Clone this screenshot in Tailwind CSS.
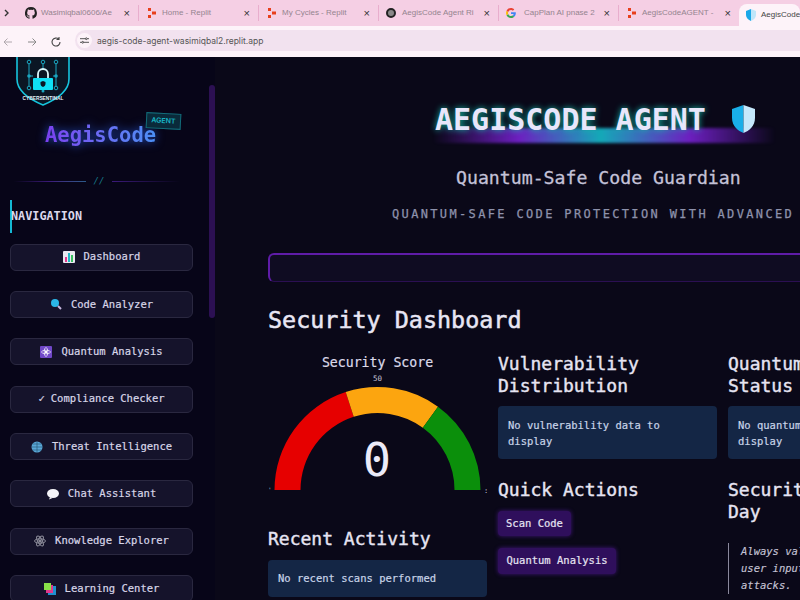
<!DOCTYPE html>
<html lang="en">
<head>
    <meta charset="UTF-8">
    <meta name="viewport" content="width=device-width, initial-scale=1.0">
    <title>AegisCode Agent</title>
    <script src="https://cdn.jsdelivr.net/npm/@tailwindcss/browser@4"></script>
</head>
<body class="w-[800px] h-[600px] overflow-hidden bg-[#0a0818] font-['DejaVu_Sans_Mono',monospace]">

    <!-- Browser tabs -->
    <div class="h-[26px] bg-[#f5cfe4] flex items-center text-[8px] text-[#94848f] font-['Liberation_Sans',sans-serif] overflow-hidden">
        <svg class="w-[18px] h-[26px] shrink-0" viewBox="0 0 18 26"><path d="M5 11l3 3-3 3" transform="translate(0 -1)" fill="none" stroke="#333" stroke-width="1.4"/></svg>
        <div class="w-[121px] shrink-0 h-4 flex items-center border-r border-[#e8aecd] pl-[7px] pr-[8px]">
            <svg class="w-3 h-3 shrink-0" viewBox="0 0 16 16"><path fill="#222" d="M8 0a8 8 0 0 0-2.5 15.6c.4.1.5-.2.5-.4v-1.4c-2.2.5-2.7-1-2.7-1-.4-.9-.9-1.200-.9-1.200-.7-.5.1-.5.1-.5.8.1 1.200.8 1.200.8.7 1.200 1.900.9 2.300.7.1-.5.3-.9.5-1.100-1.800-.2-3.600-.9-3.600-4 0-.9.3-1.600.8-2.100-.1-.2-.4-1 .1-2.100 0 0 .7-.2 2.200.8a7.600 7.600 0 0 1 4 0c1.500-1 2.200-.8 2.200-.8.4 1.100.2 1.900.1 2.100.5.6.8 1.300.8 2.100 0 3.100-1.900 3.700-3.700 3.900.3.3.6.800.6 1.500v2.200c0 .2.1.5.6.4A8 8 0 0 0 8 0z"/></svg>
            <span class="ml-[4px] whitespace-nowrap">Wasimiqbal0606/Ae</span>
            <span class="ml-auto text-[#333] text-[11px] leading-none">×</span>
        </div>
        <div class="w-[120px] shrink-0 h-4 flex items-center border-r border-[#e8aecd] pl-[7px] pr-[8px]">
            <svg class="w-[10px] h-[10px] shrink-0 ml-[1px]" viewBox="0 0 10 10"><path fill="#e8401c" d="M1 0h3v3H1zM5 3.500h4v3H5zM1 7h3v3H1z"/></svg>
            <span class="ml-[5px] whitespace-nowrap">Home - Replit</span>
            <span class="ml-auto text-[#333] text-[11px] leading-none">×</span>
        </div>
        <div class="w-[120px] shrink-0 h-4 flex items-center border-r border-[#e8aecd] pl-[7px] pr-[8px]">
            <svg class="w-[10px] h-[10px] shrink-0 ml-[1px]" viewBox="0 0 10 10"><path fill="#e8401c" d="M1 0h3v3H1zM5 3.500h4v3H5zM1 7h3v3H1z"/></svg>
            <span class="ml-[5px] whitespace-nowrap">My Cycles - Replit</span>
            <span class="ml-auto text-[#333] text-[11px] leading-none">×</span>
        </div>
        <div class="w-[120px] shrink-0 h-4 flex items-center border-r border-[#e8aecd] pl-[7px] pr-[8px]">
            <div class="w-[10px] h-[10px] rounded-full bg-[#888] border-2 border-[#222] shrink-0"></div>
            <span class="ml-[6px] whitespace-nowrap">AegisCode Agent Ri</span>
            <span class="ml-auto text-[#333] text-[11px] leading-none">×</span>
        </div>
        <div class="w-[120px] shrink-0 h-4 flex items-center border-r border-[#e8aecd] pl-[7px] pr-[8px]">
            <svg class="w-[10px] h-[10px] shrink-0" viewBox="0 0 16 16"><path fill="#4285f4" d="M15.700 8.200c0-.6-.1-1.100-.1-1.600H8v3h4.300c-.2 1-.8 1.800-1.600 2.400l2.500 1.900c1.500-1.300 2.500-3.300 2.500-5.700z"/><path fill="#34a853" d="M8 16c2.200 0 4-.7 5.200-2l-2.500-1.900c-.7.5-1.600.8-2.700.8-2.100 0-3.900-1.400-4.500-3.300L.9 11.500C2.200 14.200 4.900 16 8 16z"/><path fill="#fbbc05" d="M3.500 9.600c-.3-1-.3-2.100 0-3.200L.9 4.500c-1.100 2.200-1.100 4.800 0 7z"/><path fill="#ea4335" d="M8 3.200c1.200 0 2.200.4 3 1.200l2.200-2.200C11.900.9 10.100 0 8 0 4.900 0 2.200 1.800.9 4.500l2.600 1.900C4.100 4.500 5.900 3.200 8 3.200z"/></svg>
            <span class="ml-[8px] whitespace-nowrap">CapPlan AI pnase 2</span>
            <span class="ml-auto text-[#333] text-[11px] leading-none">×</span>
        </div>
        <div class="w-[120px] shrink-0 h-4 flex items-center pl-[7px] pr-[8px]">
            <svg class="w-[10px] h-[10px] shrink-0 ml-[1px]" viewBox="0 0 10 10"><path fill="#e8401c" d="M1 0h3v3H1zM5 3.500h4v3H5zM1 7h3v3H1z"/></svg>
            <span class="ml-[5px] whitespace-nowrap">AegisCodeAGENT -</span>
            <span class="ml-auto text-[#333] text-[11px] leading-none">×</span>
        </div>
        <div class="flex-1 self-end h-[22px] bg-[#fdf3f9] rounded-t-lg flex items-center pl-[7px] text-[#444] overflow-hidden">
            <svg class="w-[10px] h-3 shrink-0" viewBox="0 0 10 12"><path d="M5 0L0 2v4c0 3 2.500 5 5 6z" fill="#1ba8e8"/><path d="M5 0l5 2v4c0 3-2.500 5-5 6z" fill="#bfe6fa"/></svg>
            <span class="ml-[5px] whitespace-nowrap">AegisCode</span>
        </div>
    </div>

    <!-- Address bar -->
    <div class="h-[31px] bg-[#fdf3f9] flex items-center pl-[2px]">
        <svg class="w-3 h-3" viewBox="0 0 12 12"><path d="M10 6H2M5.500 2.500L2 6l3.500 3.500" fill="none" stroke="#b0a8ae" stroke-width="1"/></svg>
        <svg class="w-3 h-3 ml-[12px]" viewBox="0 0 12 12"><path d="M2 6h8M6.500 2.500L10 6 6.500 9.500" fill="none" stroke="#888" stroke-width="1"/></svg>
        <svg class="w-3 h-3 ml-[12px]" viewBox="0 0 12 12"><path d="M10 6a4 4 0 1 1-1.200-2.800M9 1v2.500H6.500" fill="none" stroke="#444" stroke-width="1.100"/></svg>
        <div class="ml-[13px] mb-[3px] flex-1 h-[21px] bg-[#f2e2ef] rounded-l-full flex items-center pl-[2px] text-[8.500px] text-[#555] font-['Inter',sans-serif]">
            <span class="w-[15px] h-[15px] bg-[#fdf3f9] rounded-full flex items-center justify-center">
                <svg class="w-[9px] h-[9px]" viewBox="0 0 10 10"><path d="M0 3h6M8 3h2M0 7h2M4 7h6" stroke="#444" fill="none"/><circle cx="7" cy="3" r="1" fill="none" stroke="#444"/><circle cx="3" cy="7" r="1" fill="none" stroke="#444"/></svg>
            </span>
            <span class="ml-[5px] mt-[2px]">aegis-code-agent-wasimiqbal2.replit.app</span>
        </div>
    </div>

    <div class="flex h-[543px] overflow-hidden">

        <!-- Sidebar -->
        <aside class="w-[215px] shrink-0 bg-[#070518] relative overflow-hidden">
            <!-- scrollbar -->
            <div class="absolute right-0 top-[28px] w-[6px] h-[233px] bg-[#2c1053] rounded-sm"></div>

            <div class="ml-[16px] w-[54px] h-[49px] overflow-hidden">
                <svg class="w-[54px] h-[49px]" viewBox="0 0 54 49">
                    <path d="M1 -2v24c0 13 14 21 26 26 12-5 26-13 26-26V-2" fill="#0b1624" stroke="#16c4dc" stroke-width="1.600"/>
                    <path d="M13 5v26M27 5v7M40 5v26M13 19h4M40 19h-3" fill="none" stroke="#1aa6c0" stroke-width="1"/>
                    <circle cx="13" cy="5" r="1.800" fill="#0b1624" stroke="#1aa6c0"/><circle cx="27" cy="5" r="1.800" fill="#0b1624" stroke="#1aa6c0"/><circle cx="40" cy="5" r="1.800" fill="#0b1624" stroke="#1aa6c0"/>
                    <circle cx="13" cy="19" r="1.800" fill="#1aa6c0"/><circle cx="40" cy="19" r="1.800" fill="#1aa6c0"/>
                    <circle cx="13" cy="31" r="1.800" fill="#0b1624" stroke="#1aa6c0"/><circle cx="27" cy="34" r="1.500" fill="#1aa6c0"/><circle cx="40" cy="31" r="1.800" fill="#0b1624" stroke="#1aa6c0"/>
                    <path d="M22 21v-4a5 5 0 0 1 10 0v4" fill="none" stroke="#d9f7fb" stroke-width="1.800"/>
                    <rect x="17" y="21" width="20" height="12" rx="1" fill="#0fe0f5"/>
                    <path d="M27 24l2.500 1v2c0 1.500-1.300 2.500-2.500 3-1.200-.5-2.500-1.500-2.500-3v-2z" fill="#0b1624"/>
                    <text x="27" y="43" text-anchor="middle" font-size="4.800" font-weight="700" fill="#e6f4f7" font-family="Liberation Sans">CYBERSENTINAL</text>
                </svg>
            </div>

            <div class="relative h-[62px]">
                <div class="absolute left-[45px] top-[16px] text-[20.500px] leading-[26px] font-bold text-transparent bg-clip-text bg-linear-to-r from-[#7a3ff0] to-[#4a8ff5] drop-shadow-[0_0_5px_#2450c8]">AegisCode</div>
                <div class="absolute left-[146px] top-[7px] w-[35px] h-[16px] rotate-[3deg] border border-[#126a78] bg-[#0a2a3a] text-[#19b8c8] text-[7px] font-['Inter',sans-serif] font-semibold flex items-center justify-center">AGENT</div>
            </div>

            <div class="flex items-center mt-[11px] ml-[14px] w-[170px] h-[4px]">
                <div class="h-px w-[72px] bg-linear-to-r from-transparent via-[#3b1a7a] to-[#2a5a8a]"></div>
                <span class="w-[26px] text-center text-[9px] leading-none italic text-[#167a8a]">//</span>
                <div class="h-px w-[68px] bg-linear-to-r from-[#3b1a7a] to-transparent"></div>
            </div>

            <div class="mt-[17px] ml-[10px] h-[33px] border-l-2 border-[#14b8d4] flex items-center text-[11.800px] font-bold text-[#dcd8ec]"><span class="-ml-[1px]">NAVIGATION</span></div>

            <nav class="mt-[10.500px] ml-[10px] w-[183px] flex flex-col gap-[20.400px] text-[10.500px] text-[#d8d6e8] [-webkit-text-stroke:0.2px_#d8d6e8]">
                <div class="h-[27px] shrink-0 bg-[#15132b] border border-[#2a2840] rounded-md flex items-center justify-center gap-[9px]">
                    <svg class="w-3 h-3" viewBox="0 0 12 12"><rect width="12" height="12" rx="1" fill="#e8e8f0"/><rect x="2" y="6" width="2" height="5" fill="#e0388c"/><rect x="5" y="2" width="2" height="9" fill="#22b8c8"/><rect x="8" y="4" width="2" height="7" fill="#38c060"/></svg>
                    <span>Dashboard</span>
                </div>
                <div class="h-[27px] shrink-0 bg-[#15132b] border border-[#2a2840] rounded-md flex items-center justify-center gap-[9px]">
                    <svg class="w-3 h-3" viewBox="0 0 12 12"><circle cx="5" cy="5" r="4" fill="#2bb6e8"/><path d="M8 8l3 3" stroke="#c8b8e0" stroke-width="2"/></svg>
                    <span>Code Analyzer</span>
                </div>
                <div class="h-[27px] shrink-0 bg-[#15132b] border border-[#2a2840] rounded-md flex items-center justify-center gap-[9px]">
                    <svg class="w-3 h-3" viewBox="0 0 12 12"><rect width="12" height="12" rx="1" fill="#7048c8"/><circle cx="6" cy="6" r="1.200" fill="#fff"/><ellipse cx="6" cy="6" rx="4.500" ry="1.800" fill="none" stroke="#fff" stroke-width=".7"/><ellipse cx="6" cy="6" rx="1.800" ry="4.500" fill="none" stroke="#fff" stroke-width=".7"/></svg>
                    <span>Quantum Analysis</span>
                </div>
                <div class="h-[27px] shrink-0 bg-[#15132b] border border-[#2a2840] rounded-md flex items-center justify-center gap-[6px]">
                    <span>✓</span>
                    <span>Compliance Checker</span>
                </div>
                <div class="h-[27px] shrink-0 bg-[#15132b] border border-[#2a2840] rounded-md flex items-center justify-center gap-[9px]">
                    <svg class="w-3 h-3" viewBox="0 0 12 12"><circle cx="6" cy="6" r="5.500" fill="#5aa8d8"/><path d="M.5 6h11M6 .5v11M1.500 3h9M1.500 9h9" stroke="#24506e" stroke-width=".6"/></svg>
                    <span>Threat Intelligence</span>
                </div>
                <div class="h-[27px] shrink-0 bg-[#15132b] border border-[#2a2840] rounded-md flex items-center justify-center gap-[9px]">
                    <svg class="w-3 h-3" viewBox="0 0 12 12"><ellipse cx="6" cy="5.500" rx="6" ry="4.500" fill="#f4f4f8"/><path d="M3 9l-1 2.500L5.500 10z" fill="#f4f4f8"/></svg>
                    <span>Chat Assistant</span>
                </div>
                <div class="h-[27px] shrink-0 bg-[#15132b] border border-[#2a2840] rounded-md flex items-center justify-center gap-[9px]">
                    <svg class="w-3 h-3" viewBox="0 0 12 12"><g fill="none" stroke="#8a8a98" stroke-width="1"><ellipse cx="6" cy="6" rx="5.500" ry="2.200"/><ellipse cx="6" cy="6" rx="5.500" ry="2.200" transform="rotate(60 6 6)"/><ellipse cx="6" cy="6" rx="5.500" ry="2.200" transform="rotate(120 6 6)"/></g><circle cx="6" cy="6" r="1.500" fill="#8a8a98"/></svg>
                    <span>Knowledge Explorer</span>
                </div>
                <div class="h-[27px] shrink-0 bg-[#15132b] border border-[#2a2840] rounded-md flex items-center justify-center gap-[9px]">
                    <svg class="w-3 h-3" viewBox="0 0 12 12"><rect x="4" y="3" width="8" height="9" fill="#2090d0"/><rect x="2" y="2" width="7" height="8" fill="#e0388c"/><rect width="7" height="7" fill="#88e048"/></svg>
                    <span>Learning Center</span>
                </div>
            </nav>
        </aside>

        <!-- Main -->
        <main class="flex-1 min-w-0 overflow-hidden pl-[53px]">
            <div class="relative w-[800px] h-[104px]">
                <div class="absolute left-[165px] top-[71px] w-[342px] h-[15px] blur-[1.500px] bg-[linear-gradient(90deg,transparent,#6d1fc0_25%,#14a9b8_49%,#6d1fc0_75%,transparent)]"></div>
                <div class="absolute left-[167px] top-[46px] text-[30px] leading-[34px] font-bold text-[#e8e6fb] whitespace-nowrap [text-shadow:0_0_6px_#14b8a6]">AEGISCODE AGENT</div>
                <svg class="absolute left-[463px] top-[47px] w-[25px] h-[30px]" viewBox="0 0 25 30"><path d="M12.500 1L1 5v9c0 8 6 13 11.500 15z" fill="#19aee8"/><path d="M12.500 1L24 5v9c0 8-6 13-11.500 15z" fill="#c5e8fb"/></svg>
            </div>

            <div class="ml-[188px] text-[18.200px] leading-[24px] text-[#c4c2d8] whitespace-nowrap mt-[5px] [-webkit-text-stroke:0.3px_#c4c2d8]">Quantum-Safe Code Guardian</div>
            <div class="mt-[16px] ml-[124px] text-[12px] leading-[16px] tracking-[2.350px] text-[#8e92ac] whitespace-nowrap [-webkit-text-stroke:0.25px_#8e92ac]">QUANTUM-SAFE CODE PROTECTION WITH ADVANCED</div>

            <div class="mt-[31px] h-[29px] bg-[#0f0c22] border-t-2 border-l-2 border-[#5f1ca8] border-b border-b-[#2b0f52] rounded-tl-md rounded-bl-md"></div>

            <h2 class="mt-[23px] text-[23.400px] leading-[30px] text-[#e8e6f4] whitespace-nowrap [-webkit-text-stroke:0.5px_#e8e6f4]">Security Dashboard</h2>

            <div class="mt-[18px] grid grid-cols-[219px_219px_219px] gap-x-[11px] text-[#e6e4f2]">
                <!-- col 1 -->
                <div>
                    <div class="text-center text-[13.200px] leading-[18px] mt-[1px] text-[#dcdaea] [-webkit-text-stroke:0.2px_#dcdaea]">Security Score</div>
                    <svg class="-mt-[2px] w-[225px] h-[125px] block" viewBox="0 0 225 125">
                        <path d="M6.500 120A103 103 0 0 1 77.700 22L85.700 46.800A77 77 0 0 0 32.500 120Z" fill="#e60000"/>
                        <path d="M77.700 22A103 103 0 0 1 170 36.700L154.800 57.700A77 77 0 0 0 85.700 46.800Z" fill="#fca50f"/>
                        <path d="M170 36.700A103 103 0 0 1 212.500 120H186.500A77 77 0 0 0 154.800 57.700Z" fill="#0b8f0b"/>
                        <text x="109.500" y="11" text-anchor="middle" font-size="7.500" fill="#c8c6d8" font-family="DejaVu Sans Mono">50</text>
                        <text x="0" y="122" font-size="6" fill="#c8c6d8" font-family="DejaVu Sans Mono">'</text>
                        <text x="216" y="123" font-size="7" fill="#c8c6d8" font-family="DejaVu Sans Mono">:</text>
                        <text x="109" y="106" text-anchor="middle" font-size="47" fill="#ecebf8" font-family="DejaVu Sans Mono">0</text>
                    </svg>
                    <h3 class="mt-[33px] text-[18px] leading-[22px] whitespace-nowrap [-webkit-text-stroke:0.4px_#e6e4f2]">Recent Activity</h3>
                    <div class="mt-[10px] h-[37px] bg-[#142645] rounded flex items-center px-[10px] text-[10.500px] text-[#c8d4e8] whitespace-nowrap [-webkit-text-stroke:0.2px_#c8d4e8]">No recent scans performed</div>
                </div>
                <!-- col 2 -->
                <div>
                    <h3 class="text-[18px] leading-[22px] [-webkit-text-stroke:0.4px_#e6e4f2]">Vulnerability Distribution</h3>
                    <div class="mt-[9px] h-[53px] bg-[#142645] rounded flex items-center px-[10px] text-[10.500px] leading-[16px] text-[#c8d4e8] [-webkit-text-stroke:0.2px_#c8d4e8]">No vulnerability data to display</div>
                    <h3 class="mt-[20px] text-[18px] leading-[22px] [-webkit-text-stroke:0.4px_#e6e4f2]">Quick Actions</h3>
                    <div class="mt-[10px] w-[73px] h-[25px] bg-[#2f0f5c] rounded-sm flex items-center justify-center text-[10.500px] shadow-[0_0_4px_#3f1678] [-webkit-text-stroke:0.2px_#e6e4f2]">Scan Code</div>
                    <div class="mt-[12px] w-[118px] h-[26px] bg-[#2f0f5c] rounded-sm flex items-center justify-center text-[10.500px] shadow-[0_0_4px_#3f1678] [-webkit-text-stroke:0.2px_#e6e4f2]">Quantum Analysis</div>
                </div>
                <!-- col 3 -->
                <div>
                    <h3 class="text-[18px] leading-[22px] [-webkit-text-stroke:0.4px_#e6e4f2]">Quantum Safety Status</h3>
                    <div class="mt-[9px] h-[53px] bg-[#142645] rounded flex items-center px-[10px] text-[10.500px] leading-[16px] text-[#c8d4e8] [-webkit-text-stroke:0.2px_#c8d4e8]">No quantum safety data to display</div>
                    <h3 class="mt-[20px] text-[18px] leading-[22px] [-webkit-text-stroke:0.4px_#e6e4f2]">Security Tip of the Day</h3>
                    <div class="mt-[20px] border-l border-[#8a889c] pl-[12px] text-[10.500px] leading-[17px] italic text-[#c4c2d4] [-webkit-text-stroke:0.15px_#c4c2d4]">Always validate and sanitize user input to prevent injection attacks.</div>
                </div>
            </div>
        </main>
    </div>

</body>
</html>
